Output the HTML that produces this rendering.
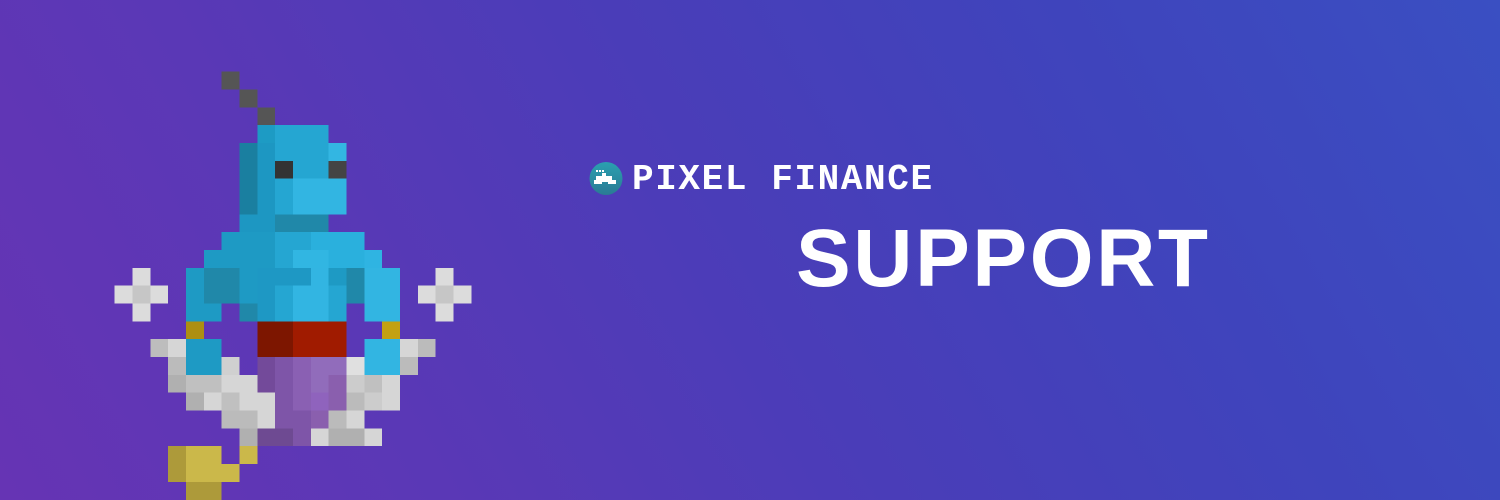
<!DOCTYPE html>
<html><head><meta charset="utf-8"><style>
html,body{margin:0;padding:0}
body{width:1500px;height:500px;overflow:hidden;position:relative;
background:linear-gradient(60deg,#6634b4 0%,#5a38b6 25%,#4a3db8 50%,#3f44bc 75%,#3a4fc2 100%);}
.t{position:absolute;left:796px;top:212px;font-family:"Liberation Sans",sans-serif;font-weight:bold;font-size:82px;color:#fff;letter-spacing:2.6px;line-height:94px;white-space:nowrap}
.l{position:absolute;left:632px;top:160px;font-family:"Liberation Mono",monospace;font-weight:bold;font-size:36px;color:#fff;letter-spacing:1.6px;line-height:40px;white-space:nowrap}
</style></head><body>
<svg width="1500" height="500" style="position:absolute;left:0;top:0">
<defs><linearGradient id="g" x1="0" y1="0" x2="0" y2="1"><stop offset="0" stop-color="#2aa0b0"/><stop offset="1" stop-color="#2a7a95"/></linearGradient></defs>
<circle cx="606" cy="178.5" r="16.5" fill="url(#g)"/>
<path d="M596 176h6v-3h4v3h6v4h4v4h-8v-2h-6v2h-8v-4h2z" fill="#fff"/>
<rect x="596" y="170" width="2" height="2" fill="#fff"/><rect x="599" y="170" width="2" height="2" fill="#fff"/><rect x="602" y="170" width="2" height="2" fill="#fff"/>
<g transform="translate(114.7,71.7) scale(17.83)" shape-rendering="crispEdges">
<rect x="6" y="0" width="1" height="1" fill="#555"/>
<rect x="7" y="1" width="1" height="1" fill="#555"/>
<rect x="8" y="2" width="1" height="1" fill="#555"/>
<rect x="8" y="3" width="1" height="1" fill="#1d9bc4"/><rect x="9" y="3" width="3" height="1" fill="#25a6d2"/>
<rect x="7" y="4" width="1" height="4" fill="#1a7fa0"/><rect x="8" y="4" width="1" height="4" fill="#1d97c2"/>
<rect x="9" y="4" width="3" height="1" fill="#25a6d2"/><rect x="12" y="4" width="1" height="1" fill="#33b6e2"/>
<rect x="9" y="5" width="1" height="1" fill="#333"/><rect x="10" y="5" width="2" height="1" fill="#25a6d2"/><rect x="12" y="5" width="1" height="1" fill="#444"/>
<rect x="9" y="6" width="1" height="2" fill="#25a6d2"/><rect x="10" y="6" width="3" height="2" fill="#32b5e2"/>
<g transform="translate(0,1)">
<rect x="7" y="7" width="2" height="1" fill="#1d97c2"/><rect x="9" y="7" width="3" height="1" fill="#2088a9"/>
<rect x="6" y="8" width="3" height="1" fill="#1e9ac4"/><rect x="9" y="8" width="2" height="1" fill="#25a6d2"/><rect x="11" y="8" width="3" height="1" fill="#2ab0dd"/>
<rect x="5" y="9" width="4" height="1" fill="#1e9ac4"/><rect x="9" y="9" width="1" height="1" fill="#25a6d2"/><rect x="10" y="9" width="2" height="1" fill="#31b6e2"/><rect x="12" y="9" width="2" height="1" fill="#2ab0dd"/><rect x="14" y="9" width="1" height="1" fill="#2fb4e2"/>
<rect x="4" y="10" width="1" height="2" fill="#1e9ac4"/><rect x="5" y="10" width="2" height="2" fill="#2088a9"/><rect x="7" y="10" width="1" height="2" fill="#1e9ac4"/><rect x="8" y="10" width="3" height="1" fill="#1e98c4"/><rect x="11" y="10" width="1" height="1" fill="#32b5e2"/><rect x="12" y="10" width="1" height="1" fill="#1e9ac4"/><rect x="13" y="10" width="1" height="2" fill="#2088a9"/><rect x="14" y="10" width="2" height="3" fill="#32b5e2"/>
<rect x="8" y="11" width="1" height="2" fill="#1e98c4"/><rect x="9" y="11" width="1" height="2" fill="#25a6d2"/><rect x="10" y="11" width="2" height="2" fill="#32b5e2"/><rect x="12" y="11" width="1" height="2" fill="#25a6d2"/>
<rect x="4" y="12" width="2" height="1" fill="#1e9ac4"/><rect x="7" y="12" width="1" height="1" fill="#2088a9"/>
<rect x="1" y="10" width="1" height="1" fill="#dcdcdc"/><rect x="0" y="11" width="1" height="1" fill="#dcdcdc"/><rect x="1" y="11" width="1" height="1" fill="#c6c6c6"/><rect x="2" y="11" width="1" height="1" fill="#dcdcdc"/><rect x="1" y="12" width="1" height="1" fill="#dcdcdc"/>
<rect x="18" y="10" width="1" height="1" fill="#dcdcdc"/><rect x="17" y="11" width="1" height="1" fill="#dcdcdc"/><rect x="18" y="11" width="1" height="1" fill="#c6c6c6"/><rect x="19" y="11" width="1" height="1" fill="#dcdcdc"/><rect x="18" y="12" width="1" height="1" fill="#dcdcdc"/>
<rect x="4" y="13" width="1" height="1" fill="#ad8f12"/><rect x="15" y="13" width="1" height="1" fill="#c3a112"/>
<rect x="8" y="13" width="2" height="2" fill="#7d1600"/><rect x="10" y="13" width="3" height="2" fill="#a01b00"/>
<rect x="2" y="14" width="1" height="1" fill="#bdbdbd"/><rect x="3" y="14" width="1" height="1" fill="#d6d6d6"/><rect x="4" y="14" width="2" height="2" fill="#1e9ac4"/><rect x="14" y="14" width="2" height="2" fill="#32b5e2"/><rect x="16" y="14" width="1" height="1" fill="#d6d6d6"/><rect x="17" y="14" width="1" height="1" fill="#bbb"/>
<rect x="3" y="15" width="1" height="1" fill="#bbb"/><rect x="6" y="15" width="1" height="1" fill="#d0d0d0"/><rect x="8" y="15" width="1" height="2" fill="#734a9a"/><rect x="9" y="15" width="1" height="3" fill="#7e55a8"/><rect x="10" y="15" width="1" height="3" fill="#8a60b3"/><rect x="11" y="15" width="2" height="1" fill="#916cbb"/><rect x="13" y="15" width="1" height="1" fill="#e0e0e0"/><rect x="16" y="15" width="1" height="1" fill="#bbb"/>
<rect x="3" y="16" width="1" height="1" fill="#b0b0b0"/><rect x="4" y="16" width="2" height="1" fill="#c0c0c0"/><rect x="6" y="16" width="2" height="1" fill="#d6d6d6"/><rect x="11" y="16" width="1" height="1" fill="#916cbb"/><rect x="12" y="16" width="1" height="2" fill="#8a5fae"/><rect x="13" y="16" width="1" height="1" fill="#ccc"/><rect x="14" y="16" width="1" height="1" fill="#c0c0c0"/><rect x="15" y="16" width="1" height="2" fill="#d6d6d6"/>
<rect x="4" y="17" width="1" height="1" fill="#b0b0b0"/><rect x="5" y="17" width="1" height="1" fill="#d6d6d6"/><rect x="6" y="17" width="1" height="1" fill="#c0c0c0"/><rect x="7" y="17" width="2" height="1" fill="#d6d6d6"/><rect x="11" y="17" width="1" height="1" fill="#8f63bd"/><rect x="13" y="17" width="1" height="1" fill="#bbb"/><rect x="14" y="17" width="1" height="1" fill="#ccc"/>
<rect x="6" y="18" width="2" height="1" fill="#bbb"/><rect x="8" y="18" width="1" height="1" fill="#d6d6d6"/><rect x="9" y="18" width="2" height="1" fill="#7e55a8"/><rect x="11" y="18" width="1" height="1" fill="#8a5fae"/><rect x="12" y="18" width="1" height="1" fill="#bbb"/><rect x="13" y="18" width="1" height="1" fill="#d6d6d6"/>
<rect x="7" y="19" width="1" height="1" fill="#b0b0b0"/><rect x="8" y="19" width="2" height="1" fill="#6e4a92"/><rect x="10" y="19" width="1" height="1" fill="#7e55a8"/><rect x="11" y="19" width="1" height="1" fill="#d6d6d6"/><rect x="12" y="19" width="2" height="1" fill="#b0b0b0"/><rect x="14" y="19" width="1" height="1" fill="#d6d6d6"/>
<rect x="3" y="20" width="1" height="2" fill="#ad9a3a"/><rect x="4" y="20" width="2" height="2" fill="#cbb84a"/><rect x="7" y="20" width="1" height="1" fill="#cbb84a"/><rect x="6" y="21" width="1" height="1" fill="#cbb84a"/>
<rect x="4" y="22" width="2" height="2" fill="#ad9a3a"/>
</g>
</g>
</svg>
<div class="l">PIXEL FINANCE</div>
<div class="t">SUPPORT</div>
</body></html>
